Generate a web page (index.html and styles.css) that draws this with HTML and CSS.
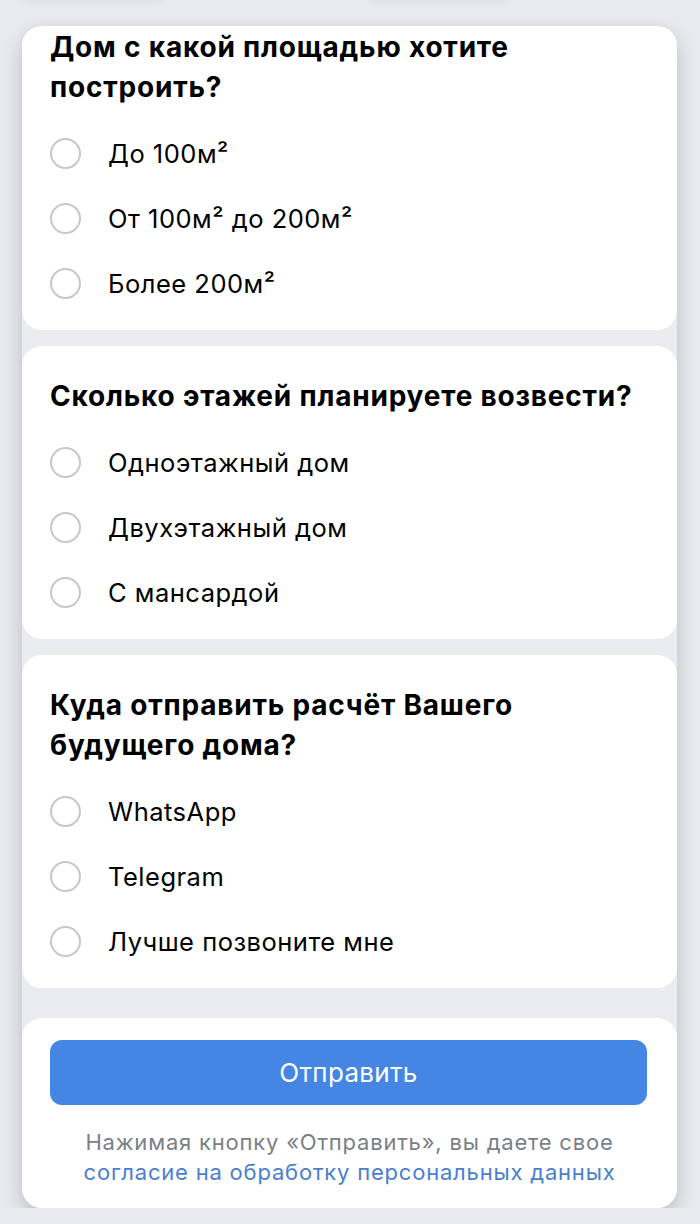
FILE: index.html
```html
<!DOCTYPE html>
<html lang="ru">
<head>
    <meta charset="UTF-8">
    <meta name="viewport" content="width=device-width, initial-scale=1.0">
    <title>Расчёт дома</title>
    <link rel="stylesheet" href="styles.css">
</head>
<body>
    <div class="tabs">
        <div class="tab tab-left"></div>
        <div class="tab tab-right"></div>
    </div>
    <form class="quiz">
        <div class="card card-first">
            <h2>Дом с какой площадью хотите построить?</h2>
            <label class="option"><input type="radio" name="area"><span class="dot"></span>До 100м²</label>
            <label class="option"><input type="radio" name="area"><span class="dot"></span>От 100м² до 200м²</label>
            <label class="option"><input type="radio" name="area"><span class="dot"></span>Более 200м²</label>
        </div>
        <div class="card">
            <h2>Сколько этажей планируете возвести?</h2>
            <label class="option"><input type="radio" name="floors"><span class="dot"></span>Одноэтажный дом</label>
            <label class="option"><input type="radio" name="floors"><span class="dot"></span>Двухэтажный дом</label>
            <label class="option"><input type="radio" name="floors"><span class="dot"></span>С мансардой</label>
        </div>
        <div class="card">
            <h2>Куда отправить расчёт Вашего будущего дома?</h2>
            <label class="option"><input type="radio" name="channel"><span class="dot"></span>WhatsApp</label>
            <label class="option"><input type="radio" name="channel"><span class="dot"></span>Telegram</label>
            <label class="option"><input type="radio" name="channel"><span class="dot"></span>Лучше позвоните мне</label>
        </div>
        <div class="card card-submit">
            <button type="submit">Отправить</button>
            <p class="consent">Нажимая кнопку «Отправить», вы даете свое<br><a href="#">согласие на обработку персональных данных</a></p>
        </div>
    </form>
</body>
</html>
```

FILE: styles.css
```css
body {
    margin: 0;
    background-color: #e9eaed;
    font-family: Inter, Roboto, sans-serif;
    color: #000;
    overflow: hidden;
}
.tabs {
    display: flex;
    height: 0;
}
.tab {
    height: 40px;
    margin-top: -44px;
    border-radius: 14px;
    background: #ebecef;
    box-shadow: 0 4px 10px rgba(0, 0, 0, 0.07);
}
.tab-left {
    width: 150px;
    margin-left: 18px;
}
.tab-right {
    width: 150px;
    margin-left: 196px;
}
.quiz {
    width: 655px;
    margin: 26px 0 0 22px;
    background: #ebecf0;
    border-radius: 20px;
    box-shadow: 0 8px 20px rgba(0, 0, 0, 0.2);
    display: flex;
    flex-direction: column;
    gap: 16px;
}
.card {
    background: #fff;
    border-radius: 20px;
    padding: 30px 28px 14px;
}
.card-first {
    padding-top: 1px;
}
.card h2 {
    margin: 0 0 14px;
    font-size: 28px;
    line-height: 40px;
    font-weight: 700;
    letter-spacing: 0.8px;
}
.option {
    display: flex;
    align-items: center;
    height: 65px;
    font-size: 25.5px;
    letter-spacing: 0.5px;
    cursor: pointer;
}
.option input {
    display: none;
}
.dot {
    width: 27px;
    height: 27px;
    border: 2px solid #c4c8cf;
    border-radius: 50%;
    margin-right: 27px;
    flex-shrink: 0;
}
.option input:checked + .dot {
    border: 9px solid #4686e4;
    width: 13px;
    height: 13px;
}
.card-submit {
    margin-top: 14px;
    padding: 22px 28px 21px;
    text-align: center;
}
.card-submit button {
    display: block;
    width: 597px;
    height: 65px;
    background: #4586e4;
    color: #fff;
    border: none;
    border-radius: 12px;
    font-family: Inter, Roboto, sans-serif;
    font-size: 26px;
    letter-spacing: 0.3px;
    cursor: pointer;
}
.consent {
    margin: 22px 0 0;
    font-size: 22px;
    line-height: 30px;
    letter-spacing: 0.8px;
    color: #7b7f87;
    white-space: nowrap;
}
.consent a {
    color: #4a7fd0;
    text-decoration: none;
}
```
